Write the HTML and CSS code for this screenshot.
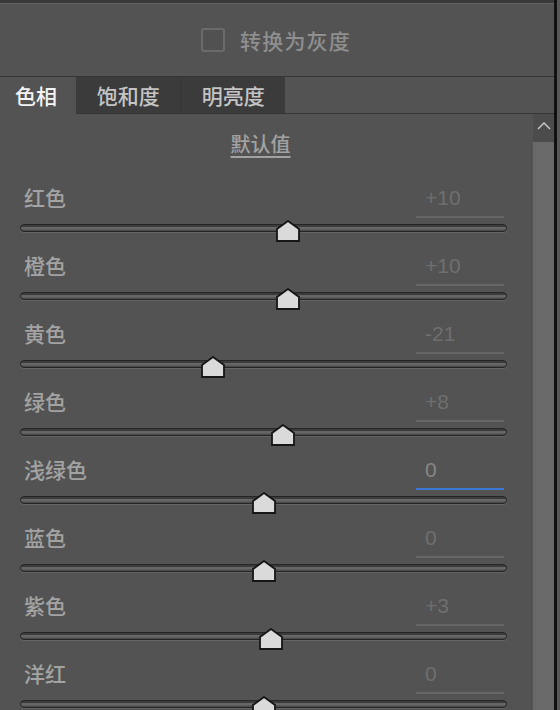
FILE: index.html
```html
<!DOCTYPE html>
<html lang="zh">
<head>
<meta charset="utf-8">
<title>HSL</title>
<link rel="stylesheet" href="styles.css">
</head>
<body>
<div class="app">
  <div class="main">
    <div class="topbar"></div>
    <div class="highlight"></div>
    <div class="check-row">
      <span class="checkbox"></span>
      <span class="check-label">转换为灰度</span>
    </div>
    <div class="tabs">
      <div class="tab active">色相</div>
      <div class="tab-group">
        <div class="tab">饱和度</div>
        <div class="tab">明亮度</div>
      </div>
      <div class="tab-fill"></div>
    </div>
    <div class="body">
      <div class="content">
        <div class="default"><span class="default-link">默认值</span></div>

        <div class="row">
          <div class="row-head"><span class="label">红色</span><span class="value">+10</span></div>
          <div class="track"><span class="thumb" style="left: calc(55% - 12px)"><svg width="24" height="22" viewBox="0 0 24 22"><polygon points="12,1 23,9 23,21 1,21 1,9"/></svg></span></div>
        </div>
        <div class="row">
          <div class="row-head"><span class="label">橙色</span><span class="value">+10</span></div>
          <div class="track"><span class="thumb" style="left: calc(55% - 12px)"><svg width="24" height="22" viewBox="0 0 24 22"><polygon points="12,1 23,9 23,21 1,21 1,9"/></svg></span></div>
        </div>
        <div class="row">
          <div class="row-head"><span class="label">黄色</span><span class="value">-21</span></div>
          <div class="track"><span class="thumb" style="left: calc(39.5% - 12px)"><svg width="24" height="22" viewBox="0 0 24 22"><polygon points="12,1 23,9 23,21 1,21 1,9"/></svg></span></div>
        </div>
        <div class="row">
          <div class="row-head"><span class="label">绿色</span><span class="value">+8</span></div>
          <div class="track"><span class="thumb" style="left: calc(54% - 12px)"><svg width="24" height="22" viewBox="0 0 24 22"><polygon points="12,1 23,9 23,21 1,21 1,9"/></svg></span></div>
        </div>
        <div class="row">
          <div class="row-head"><span class="label">浅绿色</span><span class="value focused">0</span></div>
          <div class="track"><span class="thumb" style="left: calc(50% - 12px)"><svg width="24" height="22" viewBox="0 0 24 22"><polygon points="12,1 23,9 23,21 1,21 1,9"/></svg></span></div>
        </div>
        <div class="row">
          <div class="row-head"><span class="label">蓝色</span><span class="value">0</span></div>
          <div class="track"><span class="thumb" style="left: calc(50% - 12px)"><svg width="24" height="22" viewBox="0 0 24 22"><polygon points="12,1 23,9 23,21 1,21 1,9"/></svg></span></div>
        </div>
        <div class="row">
          <div class="row-head"><span class="label">紫色</span><span class="value">+3</span></div>
          <div class="track"><span class="thumb" style="left: calc(51.5% - 12px)"><svg width="24" height="22" viewBox="0 0 24 22"><polygon points="12,1 23,9 23,21 1,21 1,9"/></svg></span></div>
        </div>
        <div class="row">
          <div class="row-head"><span class="label">洋红</span><span class="value">0</span></div>
          <div class="track"><span class="thumb" style="left: calc(50% - 12px)"><svg width="24" height="22" viewBox="0 0 24 22"><polygon points="12,1 23,9 23,21 1,21 1,9"/></svg></span></div>
        </div>
      </div>
      <div class="scrollbar">
        <div class="scroll-btn">
          <svg width="14" height="9" viewBox="0 0 14 9"><polyline points="1,8 7,2 13,8"/></svg>
        </div>
        <div class="scroll-track"></div>
      </div>
    </div>
  </div>
  <div class="edge"></div>
  <div class="gutter"></div>
</div>
</body>
</html>
```

FILE: styles.css
```css
html, body {
  margin: 0;
  padding: 0;
}
body {
  width: 560px;
  height: 710px;
  overflow: hidden;
  background: #535353;
  font-family: "Noto Sans CJK SC", "Liberation Sans", sans-serif;
}
.app {
  display: flex;
  height: 710px;
}
.main {
  width: 554px;
  display: flex;
  flex-direction: column;
  background: #535353;
}
.edge {
  width: 3px;
  background: #111111;
}
.gutter {
  width: 3px;
  background: #575757;
}
.topbar {
  height: 3px;
  background: #393939;
}
.highlight {
  height: 1px;
  background: #626262;
}
.check-row {
  height: 72px;
  display: flex;
  align-items: center;
  justify-content: center;
  gap: 15px;
  padding-right: 2px;
}
.checkbox {
  width: 20px;
  height: 20px;
  border: 2px solid #6a6a6a;
  border-radius: 3px;
  background: #515151;
}
.check-label {
  font-size: 21px;
  font-weight: 500;
  line-height: 24px;
  color: #8f8f8f;
  letter-spacing: 1.2px;
}
.tabs {
  display: flex;
  border-top: 1px solid #363636;
  height: 37px;
}
.tab {
  height: 36px;
  line-height: 36px;
  font-size: 21px;
  font-weight: 500;
  color: #c4c4c4;
  text-align: center;
}
.tab.active {
  width: 76px;
  height: 37px;
  padding-right: 4px;
  box-sizing: border-box;
  color: #f4f4f4;
  background: #535353;
}
.tab-group {
  display: flex;
  width: 209px;
  background: #3b3b3b;
  border-bottom: 1px solid #363636;
}
.tab-group .tab {
  width: 105px;
}
.tab-group .tab + .tab {
  width: 104px;
  border-left: 1px solid #383838;
}
.tab-fill {
  flex: 1;
  border-bottom: 1px solid #363636;
}
.body {
  flex: 1;
  display: flex;
  overflow: hidden;
}
.content {
  width: 533px;
}
.default {
  height: 62px;
  box-sizing: border-box;
  padding-top: 19px;
  padding-right: 12px;
  text-align: center;
}
.default-link {
  font-size: 20px;
  font-weight: 500;
  line-height: 22px;
  color: #a2a2a2;
  text-decoration: underline;
  text-underline-offset: 4px;
}
.row {
  height: 68px;
  box-sizing: border-box;
  padding-top: 10px;
}
.row-head {
  display: flex;
  justify-content: space-between;
  align-items: flex-start;
  height: 32px;
}
.label {
  padding-left: 24px;
  font-size: 21px;
  font-weight: 500;
  line-height: 23px;
  color: #a3a3a3;
}
.value {
  width: 88px;
  height: 32px;
  margin-right: 29px;
  padding-left: 9px;
  box-sizing: border-box;
  border-bottom: 2px solid #666666;
  font-family: "Liberation Sans", "Noto Sans CJK SC", sans-serif;
  font-size: 21px;
  line-height: 23px;
  color: #6f6f6f;
}
.value.focused {
  color: #868686;
  border-bottom-color: #3a78d4;
}
.track {
  position: relative;
  margin-top: 6px;
  margin-left: 20px;
  width: 487px;
  height: 8px;
  box-sizing: border-box;
  border: 1px solid #252525;
  border-radius: 4px;
  background: linear-gradient(#3c3c3c 0, #3c3c3c 30%, #727272 45%, #5e5e5e 70%, #444444 100%);
  box-shadow: 0 1px 0 #646464;
}
.thumb {
  position: absolute;
  top: -5px;
  width: 24px;
  height: 22px;
}
.thumb svg {
  display: block;
}
.thumb polygon {
  fill: #dadada;
  stroke: #161616;
  stroke-width: 1.8;
  stroke-linejoin: miter;
}
.scrollbar {
  width: 21px;
  display: flex;
  flex-direction: column;
}
.scroll-btn {
  height: 28px;
  background: #4c4c4c;
  display: flex;
  align-items: center;
  justify-content: center;
}
.scroll-btn svg {
  display: block;
  margin-bottom: 6px;
}
.scroll-btn polyline {
  fill: none;
  stroke: #d0d0d0;
  stroke-width: 1.4;
}
.scroll-track {
  flex: 1;
  background: #696969;
}
```
